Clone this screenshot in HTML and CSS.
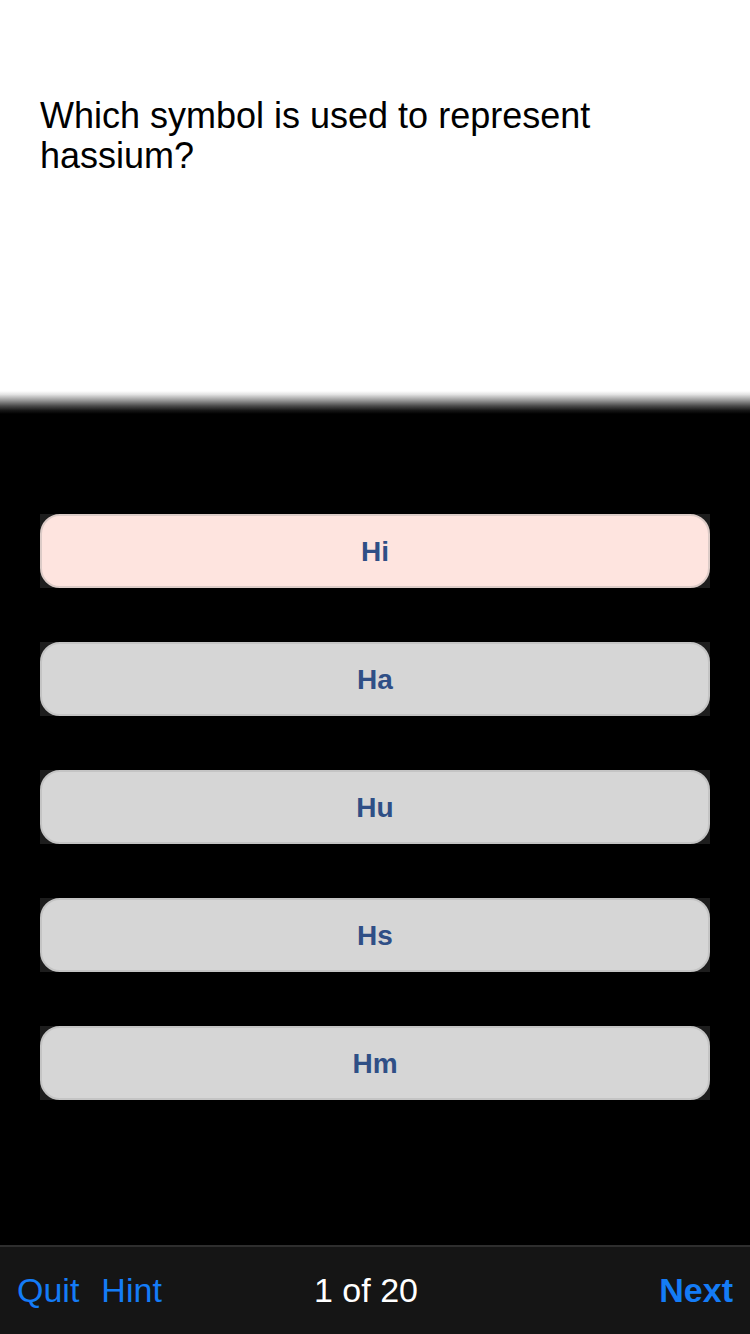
FILE: index.html
```html
<!DOCTYPE html>
<html>
<head>
<meta charset="utf-8">
<link rel="stylesheet" href="styles.css">
</head>
<body>
<div class="screen">
  <section class="question">
    <p class="question-text">Which symbol is used to represent hassium?</p>
  </section>
  <div class="shade"></div>
  <main class="options">
    <div class="option"><div class="btn btn-selected">Hi</div></div>
    <div class="option"><div class="btn">Ha</div></div>
    <div class="option"><div class="btn">Hu</div></div>
    <div class="option"><div class="btn">Hs</div></div>
    <div class="option"><div class="btn">Hm</div></div>
  </main>
  <footer class="toolbar">
    <div class="tb-left"><span class="link">Quit</span><span class="link">Hint</span></div>
    <div class="tb-center">1 of 20</div>
    <div class="tb-right"><span class="link link-bold">Next</span></div>
  </footer>
</div>
</body>
</html>
```
FILE: styles.css
```css
html, body {
  margin: 0;
  padding: 0;
  background: #000;
}
.screen {
  width: 750px;
  height: 1334px;
  display: flex;
  flex-direction: column;
  font-family: "Liberation Sans", Arial, sans-serif;
  overflow: hidden;
}
.question {
  height: 391px;
  background: #fff;
  padding: 96px 40px 0 40px;
  box-sizing: border-box;
}
.question-text {
  margin: 0;
  font-size: 36px;
  line-height: 40px;
  color: #000;
}
.shade {
  height: 23px;
  background: linear-gradient(to bottom, #ffffff 0%, #e4e4e4 15%, #9a9a9a 40%, #4a4a4a 65%, #161616 85%, #000 100%);
}
.options {
  flex: 1;
  display: flex;
  flex-direction: column;
  gap: 54px;
  padding: 100px 40px 0 40px;
}
.option {
  height: 74px;
  background: #1d1d1d;
}
.btn {
  height: 100%;
  box-sizing: border-box;
  border-radius: 20px;
  background: #d6d6d6;
  border: 2px solid #c4c4c4;
  display: flex;
  align-items: center;
  justify-content: center;
  font-weight: bold;
  font-size: 28px;
  color: #2f4f86;
  padding-top: 1px;
}
.btn-selected {
  background: #fee4df;
  border-color: #dccbc7;
}
.toolbar {
  height: 89px;
  box-sizing: border-box;
  border-top: 2px solid #2e2e2e;
  background: #151515;
  display: grid;
  grid-template-columns: 1fr auto 1fr;
  align-items: center;
  padding: 0 17px;
  font-size: 34px;
}
.tb-left {
  display: flex;
  gap: 22px;
}
.tb-center {
  color: #fff;
  margin-right: 18px;
}
.tb-right {
  display: flex;
  justify-content: flex-end;
}
.link {
  color: #147cf6;
}
.link-bold {
  font-weight: bold;
}
```
